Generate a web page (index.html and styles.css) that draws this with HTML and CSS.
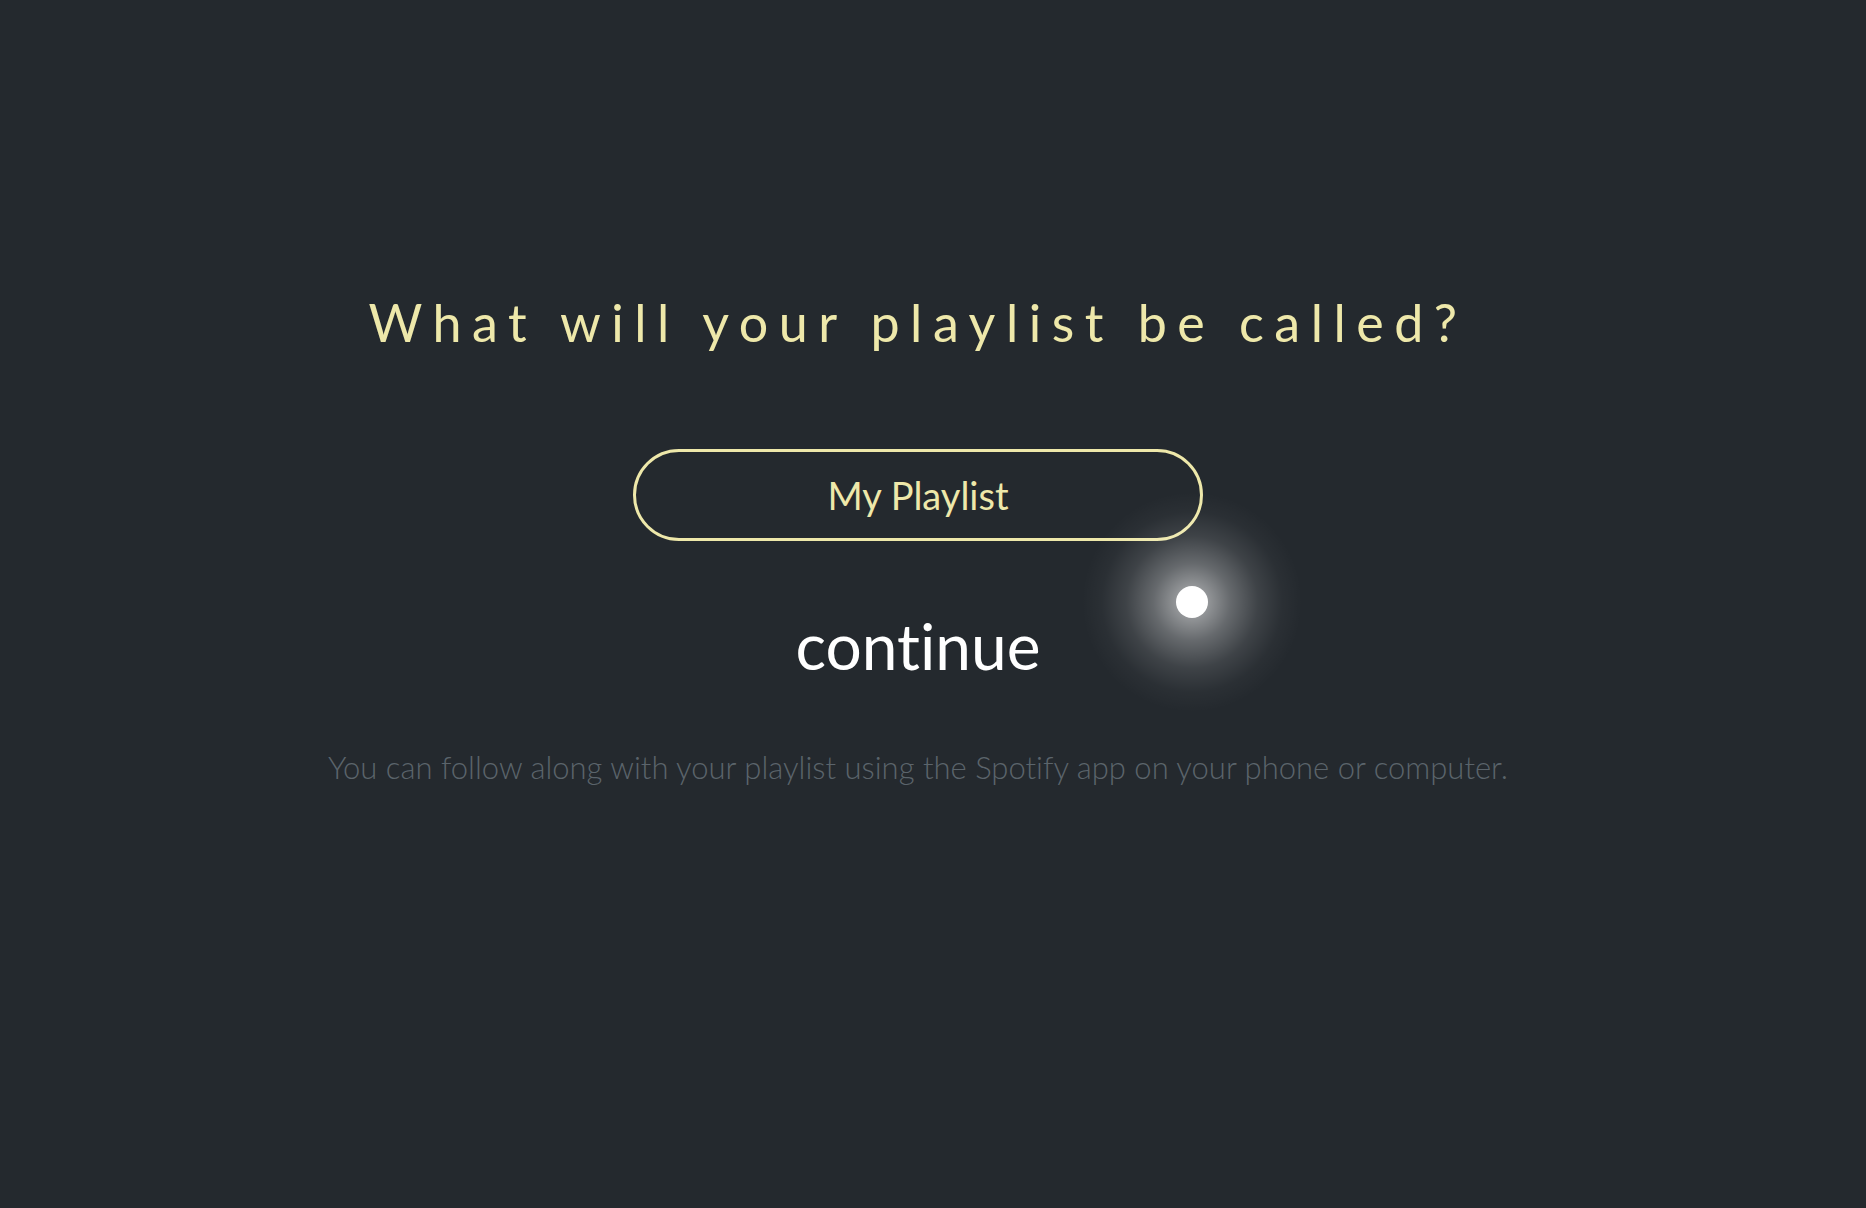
FILE: index.html
```html
<!DOCTYPE html>
<html lang="en">
<head>
<meta charset="utf-8">
<title>Name your playlist</title>
<link rel="stylesheet" href="styles.css">
</head>
<body>
<main class="page">
  <h1 class="title">What will your playlist be called?</h1>
  <div class="name-box">
    <input class="name-input" type="text" value="My Playlist">
  </div>
  <button class="continue" type="button">continue</button>
  <p class="note">You can follow along with your playlist using the Spotify app on your phone or computer.</p>
</main>
<div class="cursor-glow"><div class="cursor-dot"></div></div>
</body>
</html>
```
FILE: styles.css
```css
html, body {
  margin: 0;
  padding: 0;
  height: 100%;
}
body {
  background: #24292e;
  font-family: Lato, "Open Sans", sans-serif;
  overflow: hidden;
  position: relative;
  font-variant-ligatures: none;
}
.page {
  display: flex;
  flex-direction: column;
  align-items: center;
  padding: 291px 30px 0 0;
}
.title {
  margin: 0;
  font-size: 52px;
  line-height: 62px;
  font-weight: 400;
  letter-spacing: 10.5px;
  color: #eee8aa;
}
.name-box {
  margin-top: 96px;
  width: 570px;
  height: 92px;
  box-sizing: border-box;
  border: 3px solid #eee8aa;
  border-radius: 46px;
  display: flex;
  align-items: center;
  justify-content: center;
}
.name-input {
  width: 100%;
  background: transparent;
  border: none;
  outline: none;
  padding: 0;
  text-align: center;
  font-family: Lato, sans-serif;
  font-size: 38px;
  line-height: 46px;
  height: 46px;
  color: #eee8aa;
}
.continue {
  margin-top: 66px;
  background: none;
  border: none;
  padding: 0;
  font-family: Lato, sans-serif;
  font-variant-ligatures: none;
  font-size: 64px;
  line-height: 77px;
  color: #ffffff;
  cursor: pointer;
}
.note {
  margin: 65px 0 0;
  font-family: Lato, sans-serif;
  font-weight: 300;
  font-size: 31px;
  line-height: 37px;
  color: #5b646b;
}
.cursor-glow {
  position: absolute;
  left: 1082px;
  top: 492px;
  width: 220px;
  height: 220px;
  border-radius: 50%;
  background: radial-gradient(circle closest-side, rgba(255,255,255,0.6) 0, rgba(255,255,255,0.5) 15%, rgba(255,255,255,0.3) 35%, rgba(255,255,255,0.12) 60%, rgba(255,255,255,0.03) 82%, rgba(255,255,255,0) 100%);
  display: flex;
  align-items: center;
  justify-content: center;
}
.cursor-dot {
  width: 32px;
  height: 32px;
  border-radius: 50%;
  background: #ffffff;
}
```
